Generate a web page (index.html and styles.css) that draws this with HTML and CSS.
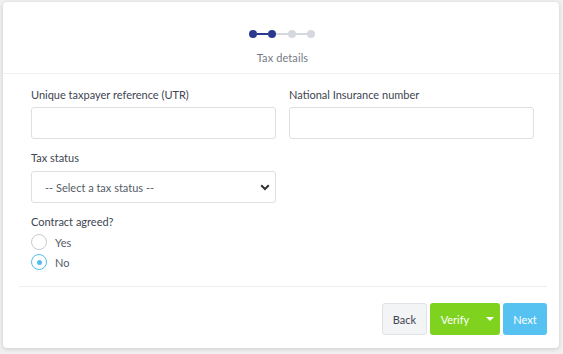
FILE: index.html
```html
<!DOCTYPE html>
<html>
<head>
<meta charset="utf-8">
<link rel="stylesheet" href="styles.css">
</head>
<body>
<div class="card">
  <div class="header">
    <div class="steps">
      <span class="dot done"></span><span class="line done"></span><span class="dot done"></span><span class="line"></span><span class="dot"></span><span class="line"></span><span class="dot"></span>
    </div>
    <div class="step-title">Tax details</div>
  </div>
  <div class="form">
    <div class="row">
      <div class="field">
        <label class="label">Unique taxpayer reference (UTR)</label>
        <input class="input" type="text">
      </div>
      <div class="field">
        <label class="label">National Insurance number</label>
        <input class="input" type="text">
      </div>
    </div>
    <div class="row">
      <div class="field">
        <label class="label">Tax status</label>
        <div class="select">
          <span>-- Select a tax status --</span>
          <svg width="10" height="7" viewBox="0 0 10 7"><path d="M1.2 1.3 L5 5 L8.8 1.3" fill="none" stroke="#333" stroke-width="2"/></svg>
        </div>
      </div>
      <div class="field"></div>
    </div>
    <div class="radio-group">
      <div class="label">Contract agreed?</div>
      <div class="radio"><span class="circle"></span><span>Yes</span></div>
      <div class="radio"><span class="circle checked"></span><span>No</span></div>
    </div>
  </div>
  <div class="footer">
    <button class="btn back">Back</button>
    <div class="split">
      <button class="btn verify">Verify</button>
      <button class="btn caret"><svg width="8" height="4" viewBox="0 0 8 4"><path d="M0 0 H8 L4 4 Z" fill="#fff"/></svg></button>
    </div>
    <button class="btn next">Next</button>
  </div>
</div>
</body>
</html>
```

FILE: styles.css
```css
html, body {
  margin: 0;
  padding: 0;
  background: #f0f0f0;
  font-family: Lato, "Liberation Sans", sans-serif;
}
body {
  padding: 2px 4px 6px 3px;
}
.card {
  background: #fff;
  border-radius: 4px;
  box-shadow: 0 1px 4px rgba(0,0,0,0.16);
  height: 346px;
  display: flex;
  flex-direction: column;
}
.header {
  border-bottom: 1px solid #eef0f2;
  height: 71px;
  display: flex;
  flex-direction: column;
  align-items: center;
}
.steps {
  display: flex;
  align-items: center;
  margin-top: 28px;
  margin-left: 2px;
}
.dot {
  width: 8px;
  height: 8px;
  border-radius: 50%;
  background: #d5d8de;
}
.dot.done { background: #2b3a8f; }
.line {
  width: 11.5px;
  height: 2px;
  background: #d5d8de;
}
.line.done { background: #2b3a8f; }
.step-title {
  margin-top: 13px;
  font-size: 11px;
  color: #737a85;
  letter-spacing: 0.1px;
  margin-left: 3px;
}
.form {
  padding: 14px 25px 0 28px;
  display: flex;
  flex-direction: column;
}
.row {
  display: flex;
  gap: 13px;
  margin-bottom: 12px;
}
.field {
  flex: 1;
  display: flex;
  flex-direction: column;
}
.label {
  font-size: 11px;
  color: #3d4551;
  line-height: 14px;
  margin-bottom: 5px;
}
.row + .row .label { margin-bottom: 6px; }
.input {
  height: 32px;
  box-sizing: border-box;
  border: 1px solid #dcdfe4;
  border-radius: 3px;
  margin: 0;
  padding: 0 12px;
  font: inherit;
}
.select {
  height: 32px;
  box-sizing: border-box;
  border: 1px solid #dcdfe4;
  border-radius: 3px;
  display: flex;
  align-items: center;
  justify-content: space-between;
  padding: 0 5px 0 13px;
  font-size: 11px;
  color: #555c66;
}
.radio-group {
  display: flex;
  flex-direction: column;
}
.radio-group .label { margin-bottom: 3px; }
.radio {
  display: flex;
  align-items: center;
  height: 20px;
  font-size: 11px;
  color: #555c66;
}
.circle {
  width: 16px;
  height: 16px;
  box-sizing: border-box;
  border: 1px solid #c9ccd2;
  border-radius: 50%;
  margin-right: 8px;
  display: flex;
  align-items: center;
  justify-content: center;
}
.circle.checked { border-color: #52bdf0; }
.circle.checked::after {
  content: "";
  width: 5px;
  height: 5px;
  border-radius: 50%;
  background: #52bdf0;
}
.footer {
  margin: auto 12px 13px 16px;
  border-top: 1px solid #eceef1;
  padding-top: 16px;
  display: flex;
  justify-content: flex-end;
  gap: 3px;
}
.btn {
  height: 32px;
  border: none;
  border-radius: 3px;
  font: inherit;
  font-size: 11px;
  color: #fff;
  margin: 0;
  padding: 0;
  display: flex;
  align-items: center;
  justify-content: center;
}
.back {
  width: 45px;
  background: #f3f4f6;
  border: 1px solid #dfe2e6;
  color: #3d4551;
}
.split { display: flex; }
.verify {
  width: 50px;
  background: #7fd31f;
  border-radius: 3px 0 0 3px;
}
.caret {
  width: 20px;
  background: #7fd31f;
  border-radius: 0 3px 3px 0;
}
.next {
  width: 44px;
  background: #55c2f2;
}
```
